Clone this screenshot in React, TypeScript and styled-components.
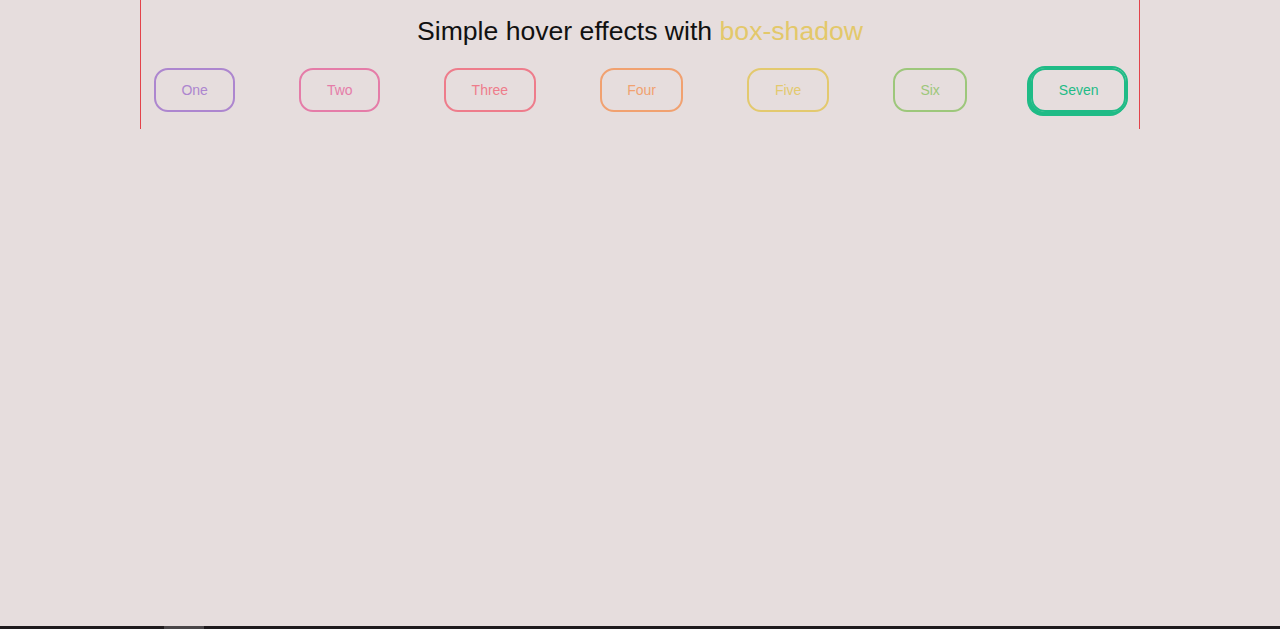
import React from "react";
import styled, { createGlobalStyle, css } from "styled-components";

const GlobalStyle = createGlobalStyle`
  html, body {
    margin: 0;
    padding: 0;
    background: #e6dddd;
    font-family: "Liberation Sans", Arial, sans-serif;
  }
`;

const Page = styled.div`
  min-height: 100vh;
  display: flex;
  flex-direction: column;
`;

const Main = styled.main`
  flex: 1;
`;

const Container = styled.section`
  width: 998px;
  margin: 0 auto;
  border-left: 1px solid #e3424a;
  border-right: 1px solid #e3424a;
  padding: 16px 0 17px;
  box-sizing: content-box;
`;

const Title = styled.h1`
  margin: 0;
  font-size: 26.6px;
  font-weight: 400;
  line-height: 30px;
  color: #111;
  text-align: center;
`;

const Accent = styled.span`
  color: #e3c86a;
`;

const Row = styled.div`
  margin-top: 22px;
  display: flex;
  justify-content: center;
  align-items: center;
  gap: 64px;
`;

const Button = styled.button<{ $color: string; $active?: boolean }>`
  font-family: "Liberation Sans", Arial, sans-serif;
  font-size: 14px;
  line-height: 16px;
  padding: 12px 25.5px;
  background: transparent;
  border: 2px solid ${(p) => p.$color};
  border-radius: 14px;
  color: ${(p) => p.$color};
  cursor: pointer;
  ${(p) =>
    p.$active &&
    css`
      box-shadow: 0 0 0 2px ${p.$color}, -2px 2px 0 2px ${p.$color};
    `}
`;

const ScrollBar = styled.div`
  height: 3px;
  background: #1e1a1c;
  position: relative;
`;

const Thumb = styled.div`
  position: absolute;
  left: 164px;
  top: 0;
  width: 40px;
  height: 3px;
  background: #4a4648;
`;

const buttons = [
  { label: "One", color: "#ad86cf" },
  { label: "Two", color: "#e57ca8" },
  { label: "Three", color: "#ee7c8b" },
  { label: "Four", color: "#f1a170" },
  { label: "Five", color: "#e3c96e" },
  { label: "Six", color: "#9dc77b" },
  { label: "Seven", color: "#1fbb86", active: true },
];

export default function App() {
  return (
    <Page>
      <GlobalStyle />
      <Main>
        <Container>
          <Title>
            Simple hover effects with <Accent>box-shadow</Accent>
          </Title>
          <Row>
            {buttons.map((b) => (
              <Button key={b.label} $color={b.color} $active={b.active}>
                {b.label}
              </Button>
            ))}
          </Row>
        </Container>
      </Main>
      <ScrollBar>
        <Thumb />
      </ScrollBar>
    </Page>
  );
}
